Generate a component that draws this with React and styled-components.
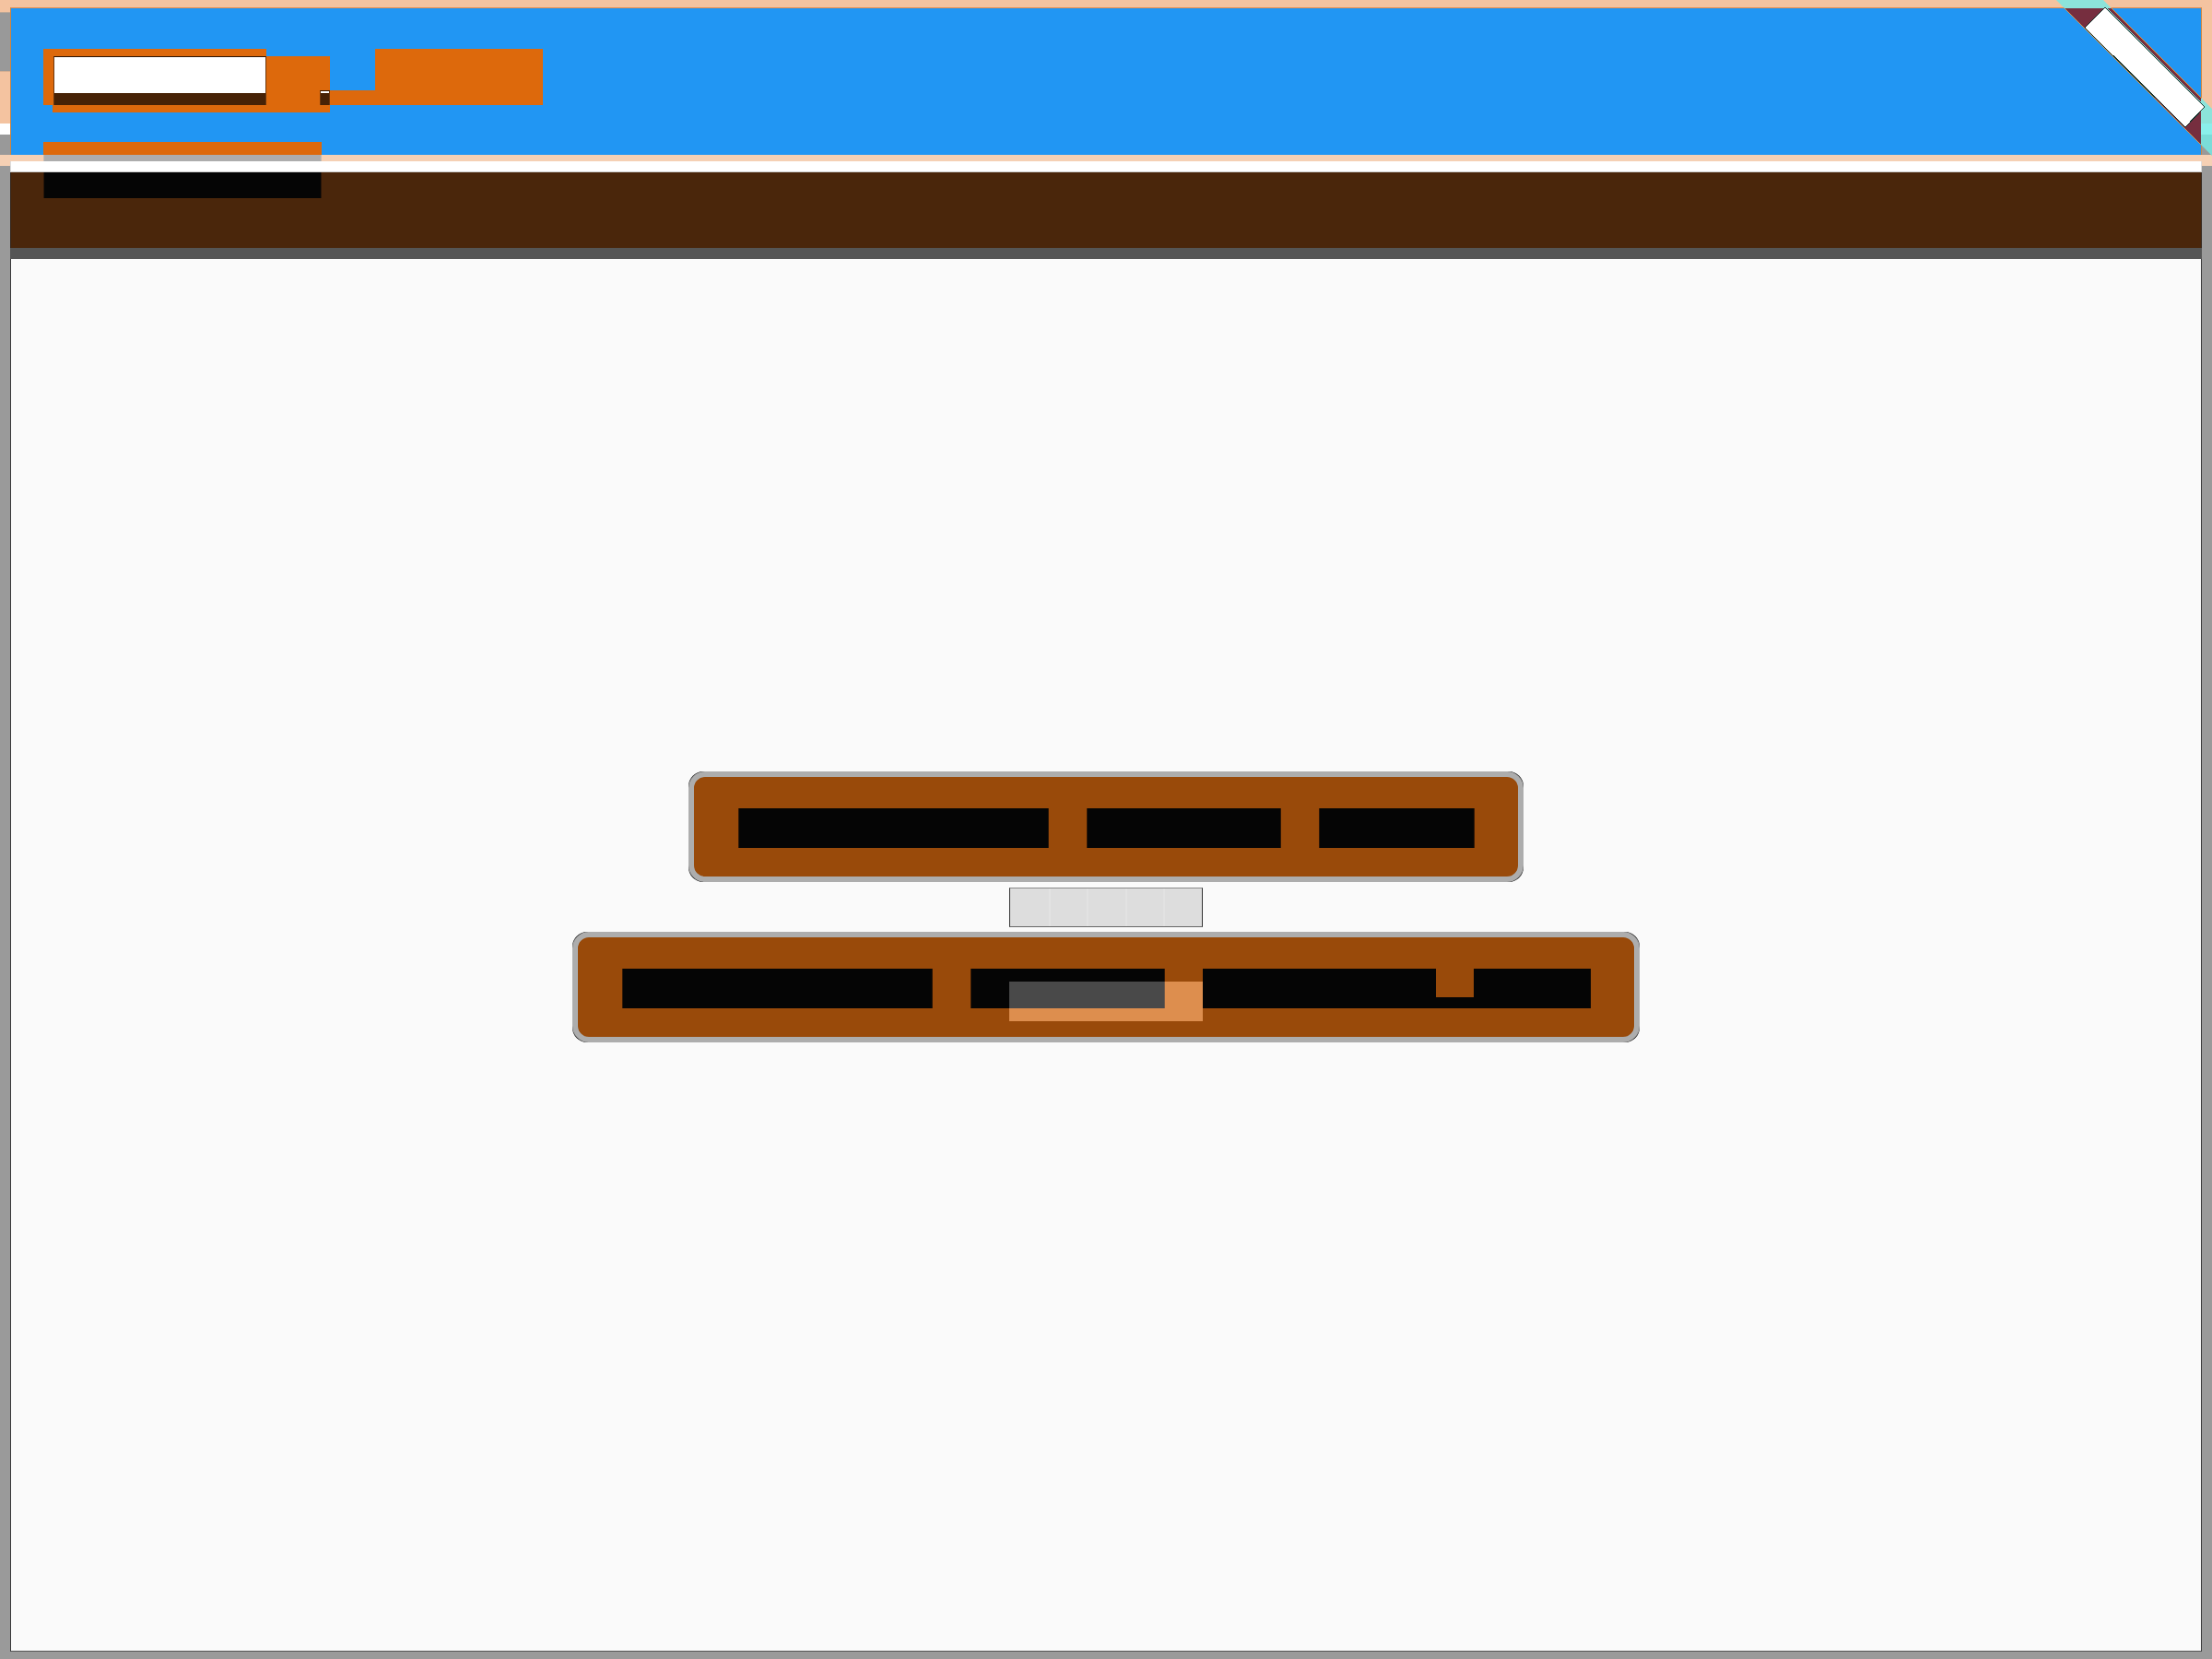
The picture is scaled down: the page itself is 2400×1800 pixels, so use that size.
import React from "react";
import styled, { createGlobalStyle } from "styled-components";

const Global = createGlobalStyle`
  *, *::before, *::after { box-sizing: border-box; }
  body { margin: 0; background: #9a9a9a; font-family: "Liberation Sans", Arial, sans-serif; }
`;

const Page = styled.div`
  position: relative;
  display: flex;
  flex-direction: column;
  min-height: 100vh;
  overflow: hidden;
  background: #9a9a9a;
  padding-bottom: 8px;
`;

const TopEdge = styled.div`
  height: 8px;
  background: #f4c3a0;
`;

const Columns = styled.div`
  flex: 1;
  display: grid;
  grid-template-columns: 11px minmax(0, 1fr) 11px;
`;

const Side = styled.div`
  display: flex;
  flex-direction: column;
`;

const Segment = styled.div`
  height: ${(p) => p.$size}px;
  background: ${(p) => p.$tone};
`;

const Main = styled.main`
  display: flex;
  flex-direction: column;
`;

const Header = styled.header`
  display: flex;
  flex-direction: column;
  height: 160px;
  background: #2196f3;
  border: 1px solid #ce853f;
  border-top-color: #e58b4c;
  border-bottom: 0;
`;

const Highlights = styled.div`
  display: grid;
  grid-template-columns: 35px 10px 1px 231px 58px 11px 49px 182px;
  grid-template-rows: 44px 8px 37px 16px 8px;
`;

const Block = styled.div`
  grid-column: ${(p) => p.$cols};
  grid-row: ${(p) => p.$rows};
  background: #dd690c;
`;

const Field = styled.div`
  grid-column: ${(p) => p.$cols};
  grid-row: ${(p) => p.$rows};
  border: 1px solid #6d370d;
  border-top-color: #2b1404;
  border-bottom: 0;
  background: linear-gradient(to top, #472206 13px, #ffffff 13px);
`;

const TabTop = styled.div`
  width: 302px;
  height: 14px;
  margin: auto 0 0 35px;
  background: #dd690c;
`;

const Band = styled.div`
  height: 7px;
  padding: 0 36px;
  background: #f5d0b4;
`;

const TabMiddle = styled.div`
  width: 302px;
  height: 7px;
  background: #adadad;
  border: solid #c9bcb0;
  border-width: 0 1px;
`;

const Divider = styled.div`
  height: 12px;
  background: #ffffff;
  border: 1px solid #dddddd;
  border-top: 0;
  border-bottom-color: #cccccc;
`;

const Toolbar = styled.div`
  height: 82px;
  padding: 0 35px;
  background: #4a260b;
  border: solid #33251c;
  border-width: 0 1px;
`;

const TabBottom = styled.div`
  width: 302px;
  height: 28px;
  background: #050505;
  border: solid #2b1608;
  border-width: 0 1px;
`;

const Rule = styled.div`
  height: 12px;
  background: #555555;
`;

const Sheet = styled.section`
  flex: 1;
  display: flex;
  flex-direction: column;
  align-items: center;
  justify-content: center;
  padding-bottom: 104px;
  background: #fafafa;
  border: 1px solid #38393a;
  border-top: 0;
  border-bottom-color: #555555;
`;

const CardEdge = styled.div`
  border-radius: 16px;
  background: #222222;
`;

const Card = styled.div`
  position: relative;
  display: flex;
  gap: 41px;
  padding: 34px 47px 31px 48px;
  border: 6px solid #adadad;
  border-radius: 18px;
  background: #994a0a;
`;

const Word = styled.div`
  width: ${(p) => p.$w}px;
  height: 43px;
  background: #050505;
  border: solid #2f1705;
  border-width: 0 1px;
`;

const Joined = styled.div`
  display: flex;
  align-items: flex-end;
`;

const Piece = styled.div`
  width: ${(p) => p.$w}px;
  height: ${(p) => p.$h}px;
  background: #050505;
`;

const Meter = styled.div`
  display: grid;
  grid-template-columns: repeat(5, 1fr);
  width: 210px;
  height: 43px;
  margin: 6px 0 5px;
  background: #dddddd;
  border: 1px solid #333333;
  border-top-color: #888888;
  border-bottom-color: #666666;
`;

const Cell = styled.span`
  & + & { border-left: 2px solid #e2e2e2; }
`;

const Glow = styled.div`
  position: absolute;
  top: 48px;
  left: calc(50% - 105px);
  width: 210px;
  height: 43px;
  background: #444444;
  mix-blend-mode: plus-lighter;
`;

const Ribbon = styled.svg`
  position: absolute;
  top: 0;
  right: 0;
  width: 200px;
  height: 170px;
`;

function CornerRibbon() {
  return (
    <Ribbon viewBox="0 0 200 170" aria-hidden="true">
      <path d="M31 0H82L91 9H40Z" fill="#8ce3da" />
      <path d="M188 106L200 118V134H188Z" fill="#8ce3da" />
      <path d="M188 134H200V146H188Z" fill="#8aefeb" />
      <path d="M188 146H200V169L188 157Z" fill="#7adcd8" />
      <path d="M40 9H91L188 106V157Z" fill="#762e3f" />
      <g fill="none" shapeRendering="crispEdges">
        <path d="M40 9L188 157" stroke="#d0934f" />
        <path d="M91 9L188 106" stroke="#e98b35" />
        <path d="M86 9L192 115" stroke="#8ce3da" />
      </g>
      <path
        d="M84 8L192 116L171 138L62 30Z"
        fill="#ffffff"
        stroke="#18352f"
        shapeRendering="crispEdges"
      />
    </Ribbon>
  );
}

export default function App() {
  return (
    <>
      <Global />
      <Page>
        <TopEdge />
        <Columns>
          <Side>
            <Segment $size={5} $tone="#f4c3a0" />
            <Segment $size={1} $tone="#bba898" />
            <Segment $size={63} $tone="#999999" />
            <Segment $size={1} $tone="#d5ae92" />
            <Segment $size={56} $tone="#f4c3a0" />
            <Segment $size={12} $tone="#ffffff" />
            <Segment $size={22} $tone="#999999" />
            <Segment $size={12} $tone="#f5d0b4" />
          </Side>
          <Main>
            <Header>
              <Highlights>
                <Block $cols="2 / 5" $rows="2 / 5" />
                <Block $cols="3 / 7" $rows="3 / 6" />
                <Block $cols="7 / 9" $rows="4 / 5" />
                <Block $cols="8 / 9" $rows="2 / 5" />
                <Field $cols="4 / 5" $rows="3 / 5" />
                <Field $cols="6 / 7" $rows="4 / 5" />
              </Highlights>
              <TabTop />
            </Header>
            <Band>
              <TabMiddle />
            </Band>
            <Divider />
            <Toolbar>
              <TabBottom />
            </Toolbar>
            <Rule />
            <Sheet>
              <CardEdge>
                <Card>
                  <Word $w={337} />
                  <Word $w={211} />
                  <Word $w={169} />
                </Card>
              </CardEdge>
              <Meter>
                <Cell />
                <Cell />
                <Cell />
                <Cell />
                <Cell />
              </Meter>
              <CardEdge>
                <Card>
                  <Word $w={337} />
                  <Word $w={211} />
                  <Joined>
                    <Piece $w={253} $h={43} />
                    <Piece $w={41} $h={12} />
                    <Piece $w={127} $h={43} />
                  </Joined>
                  <Glow />
                </Card>
              </CardEdge>
            </Sheet>
          </Main>
          <Side>
            <Segment $size={126} $tone="#f4c3a0" />
            <Segment $size={12} $tone="#ffffff" />
            <Segment $size={22} $tone="#999999" />
            <Segment $size={12} $tone="#f5d0b4" />
          </Side>
        </Columns>
        <CornerRibbon />
      </Page>
    </>
  );
}
